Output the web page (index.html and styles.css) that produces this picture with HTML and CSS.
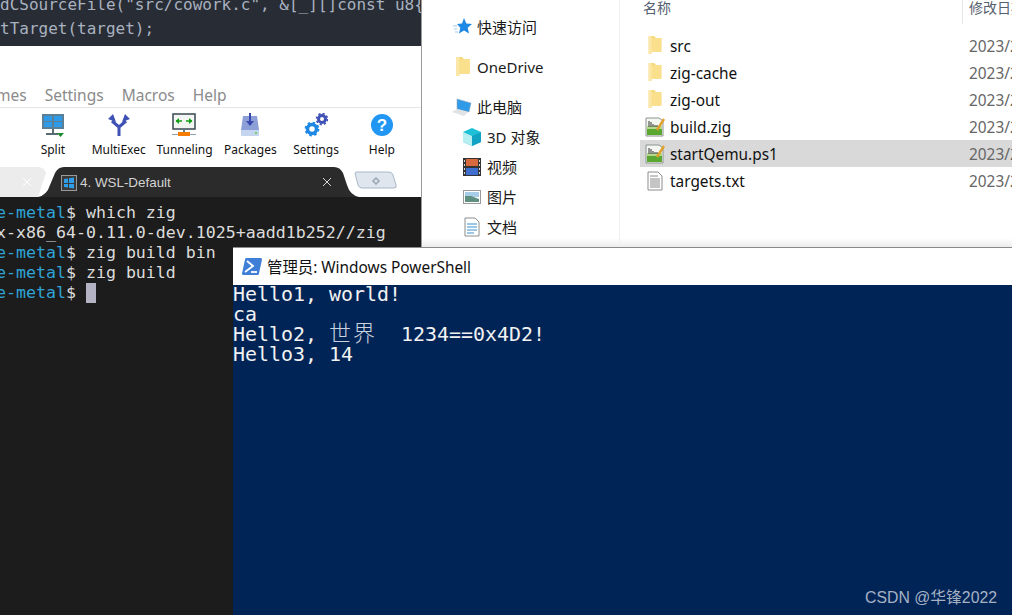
FILE: index.html
```html
<!DOCTYPE html>
<html lang="zh-CN">
<head>
<meta charset="utf-8">
<title>Desktop</title>
<link rel="stylesheet" href="styles.css">
</head>
<body>
<svg class="defs" width="0" height="0">
  <symbol id="folder" viewBox="0 0 14 18">
    <path d="M1 0h5l2 2h5v13H3l-2 2z" fill="#f6d675"/>
    <path d="M1 0h3v17H1z" fill="#fbe8a8"/>
    <path d="M4 2h9v13H4z" fill="#fadf8d"/>
  </symbol>
  <symbol id="script" viewBox="0 0 20 20">
    <path d="M1 1h13l4 3v15H1z" fill="#f4f6f2" stroke="#8c9490"/>
    <path d="M2 11h15v7H2z" fill="#5aa832"/>
    <path d="M2 9h15v3H2z" fill="#b5d98c"/>
    <path d="M4 4v6M6 5v5M8 7v3M10 8v2M12 8v2" stroke="#333" stroke-width="1"/>
    <path d="M12 13 19 2" stroke="#e0a02a" stroke-width="2.400"/>
  </symbol>
  <symbol id="doc" viewBox="0 0 16 20">
    <path d="M1 1h10l4 4v14H1z" fill="#fff" stroke="#8c8c8c"/>
    <path d="M3 5h8M3 8h10M3 10h10M3 12h10M3 14h10M3 16h10" stroke="#8a8a8a"/>
  </symbol>
</svg>

<main class="desktop">
  <section class="win moba">
    <div class="code">
      <div class="code-line">dCSourceFile("src/cowork.c", &amp;[_][]const u8{</div>
      <div class="code-line">tTarget(target);</div>
    </div>
    <div class="moba-top"></div>
    <nav class="menu"><span>mes</span><span>Settings</span><span>Macros</span><span>Help</span></nav>
    <div class="tools">
      <div class="tool">
        <svg width="24" height="24" viewBox="0 0 24 24"><rect x="1" y="1" width="22" height="15" fill="#5b7f95"/><rect x="3" y="3" width="8" height="5" fill="#2e9be8"/><rect x="13" y="3" width="8" height="5" fill="#2e9be8"/><rect x="3" y="9" width="8" height="5" fill="#2e9be8"/><rect x="13" y="9" width="8" height="5" fill="#2e9be8"/><path d="M11 16h2v4h-2zM5 20h12v2H5z" fill="#5a6a72"/><path d="M16 20h7l-3.500 4z" fill="#1f8a2e"/></svg>
        <span>Split</span>
      </div>
      <div class="tool">
        <svg width="24" height="24" viewBox="0 0 24 24"><path d="M12 23V14L5 8M12 14l7-6" fill="none" stroke="#3f51b5" stroke-width="3"/><path d="M1 6 6 1l3 8zM23 6l-5-5-3 8z" fill="#3f51b5"/></svg>
        <span>MultiExec</span>
      </div>
      <div class="tool">
        <svg width="24" height="24" viewBox="0 0 24 24"><rect x="1" y="1" width="22" height="15" fill="#f2f5f2" stroke="#37474f" stroke-width="1.500"/><path d="M4 8h6M14 8h6" stroke="#12a012" stroke-width="1.500"/><path d="M7 5 3.500 8 7 11zM17 5l3.500 3-3.500 3z" fill="#12a012"/><path d="M11 16h2v4h-2z" fill="#607d8b"/><path d="M0 21h24v1H0z" fill="#90a4ae"/><rect x="6" y="19" width="12" height="4" fill="#f57c00"/></svg>
        <span>Tunneling</span>
      </div>
      <div class="tool">
        <svg width="24" height="24" viewBox="0 0 24 24"><path d="M5 3h14l2 14H3z" fill="#8c9fd6"/><path d="M3 17h18v5q0 1-1 1H4q-1 0-1-1z" fill="#c5d5f0"/><circle cx="18" cy="20" r="1" fill="#5ad13c"/><path d="M11 0h2v8h3l-4 5-4-5h3z" fill="#3949ab"/></svg>
        <span>Packages</span>
      </div>
      <div class="tool">
        <svg width="24" height="24" viewBox="0 0 24 24"><circle cx="8" cy="16" r="4.500" fill="none" stroke="#1e88e5" stroke-width="3.500"/><circle cx="8" cy="16" r="6.500" fill="none" stroke="#1e88e5" stroke-width="1.800" stroke-dasharray="2.500 2.600"/><circle cx="18" cy="6" r="3.500" fill="none" stroke="#3f51b5" stroke-width="3"/><circle cx="18" cy="6" r="5.500" fill="none" stroke="#3f51b5" stroke-width="1.600" stroke-dasharray="2.200 2.100"/></svg>
        <span>Settings</span>
      </div>
      <div class="tool">
        <svg width="24" height="24" viewBox="0 0 24 24"><circle cx="12" cy="12" r="11" fill="#2196f3"/><text x="12" y="18" class="qmark">?</text></svg>
        <span>Help</span>
      </div>
    </div>
    <div class="tabbar">
      <svg class="tabshapes" width="421" height="30" viewBox="0 0 421 30">
        <path d="M-10 30V0H38q6 0 8 6l-8 24z" fill="#ececec"/>
        <path d="M38 30q9-2 12-12l5-12q3-6 9-6h270q6 0 9 6l4 12q3 10 12 12z" fill="#2b2b2b"/>
        <path d="M355 6q0-1 2-1h32q3 0 4 3l3 10q1 3-2 3h-32q-3 0-4-3z" fill="#dfe6ee" stroke="#a9b7c6"/>
        <path d="M23 11l8 8M31 11l-8 8" stroke="#fff" stroke-width="1"/>
        <path d="M323 11l8 8M331 11l-8 8" stroke="#d8d8d8" stroke-width="1"/>
        <path d="M373 13h2v-2h2v2h2v2h-2v2h-2v-2h-2z" fill="none" stroke="#8a98a8"/>
      </svg>
      <div class="tab-title">
        <svg width="16" height="16" viewBox="0 0 16 16"><rect x=".5" y=".5" width="15" height="15" fill="#3a3a3a" stroke="#9a9a9a"/><path d="M3 4l4-.6V8H3zM8 3.200 13 2.500V8H8zM3 9h4v3.600L3 12zM8 9h5v4.500L8 12.800z" fill="#2f9de8"/></svg>
        <span>4. WSL-Default</span>
      </div>
    </div>
    <div class="term">
      <div class="tline"><span class="prompt">e-metal</span>$ which zig</div>
      <div class="tline">x-x86_64-0.11.0-dev.1025+aadd1b252//zig</div>
      <div class="tline"><span class="prompt">e-metal</span>$ zig build bin</div>
      <div class="tline"><span class="prompt">e-metal</span>$ zig build</div>
      <div class="tline"><span class="prompt">e-metal</span>$ <span class="cursor"></span></div>
    </div>
  </section>

  <section class="win explorer">
    <aside class="side">
      <div class="side-item top">
        <svg width="20" height="20" viewBox="0 0 20 20"><path d="M11 1l2.300 5.500 5.700.5-4.300 3.800 1.300 5.700-5-3-5 3 1.300-5.700L4 7l5-.5z" fill="#1e88e5"/><path d="M0 9h4M1 12h3M2 15h3" stroke="#9fc9ef"/></svg>
        <span>快速访问</span>
      </div>
      <div class="side-item top">
        <svg width="20" height="20" viewBox="0 0 14 18"><use href="#folder"/></svg>
        <span>OneDrive</span>
      </div>
      <div class="side-item top pc">
        <svg width="20" height="20" viewBox="0 0 20 20"><path d="M5 2l14 4-2 9-12-3z" fill="#2f9be8" stroke="#9ab" stroke-width=".6"/><path d="M0 15l5-3 11 3-4 4z" fill="#dfe3e8"/></svg>
        <span>此电脑</span>
      </div>
      <div class="side-item sub">
        <svg width="20" height="20" viewBox="0 0 20 20"><path d="M10 1l9 4v10l-9 4-9-4V5z" fill="#1ec0d8"/><path d="M1 5l9 4v10l-9-4z" fill="#b6eef2"/><path d="M10 9l9-4v10l-9 4z" fill="#12a3c4"/></svg>
        <span>3D 对象</span>
      </div>
      <div class="side-item sub">
        <svg width="20" height="20" viewBox="0 0 20 20"><rect x="1" y="1" width="18" height="18" fill="#333"/><rect x="4" y="2" width="12" height="7" fill="#d8693c"/><rect x="4" y="11" width="12" height="7" fill="#3f6fd0"/><path d="M2 3h1v2H2zM2 7h1v2H2zM2 11h1v2H2zM2 15h1v2H2zM17 3h1v2h-1zM17 7h1v2h-1zM17 11h1v2h-1zM17 15h1v2h-1z" fill="#ddd"/></svg>
        <span>视频</span>
      </div>
      <div class="side-item sub">
        <svg width="20" height="20" viewBox="0 0 20 20"><rect x="1.500" y="3.500" width="17" height="13" fill="#fff" stroke="#9a9a9a"/><rect x="3" y="5" width="14" height="5" fill="#a8cde8"/><path d="M3 9l6 0 8 3v3H3z" fill="#5f8f80"/></svg>
        <span>图片</span>
      </div>
      <div class="side-item sub">
        <svg width="20" height="20" viewBox="0 0 16 20"><path d="M1 1h10l4 4v14H1z" fill="#fff" stroke="#8c8c8c"/><path d="M3 7h10M3 10h10M3 13h10M3 16h7" stroke="#3a8fd0"/></svg>
        <span>文档</span>
      </div>
    </aside>
    <div class="files">
      <div class="file-head"><span class="col-name">名称</span><span class="col-date">修改日期</span></div>
      <div class="file"><span class="ficon"><svg width="16" height="19" viewBox="0 0 14 18"><use href="#folder"/></svg></span><span class="fname">src</span><span class="fdate">2023/2/14 12:21</span></div>
      <div class="file"><span class="ficon"><svg width="16" height="19" viewBox="0 0 14 18"><use href="#folder"/></svg></span><span class="fname">zig-cache</span><span class="fdate">2023/2/14 12:21</span></div>
      <div class="file"><span class="ficon"><svg width="16" height="19" viewBox="0 0 14 18"><use href="#folder"/></svg></span><span class="fname">zig-out</span><span class="fdate">2023/2/14 12:21</span></div>
      <div class="file"><span class="ficon"><svg width="20" height="20" viewBox="0 0 20 20"><use href="#script"/></svg></span><span class="fname">build.zig</span><span class="fdate">2023/2/14 12:21</span></div>
      <div class="file selected"><span class="ficon"><svg width="20" height="20" viewBox="0 0 20 20"><use href="#script"/></svg></span><span class="fname">startQemu.ps1</span><span class="fdate">2023/2/14 12:21</span></div>
      <div class="file"><span class="ficon"><svg width="16" height="20" viewBox="0 0 16 20"><use href="#doc"/></svg></span><span class="fname">targets.txt</span><span class="fdate">2023/2/14 12:21</span></div>
    </div>
  </section>

  <section class="win ps">
    <header class="ps-title">
      <svg width="20" height="17" viewBox="0 0 20 17"><path d="M4 0h15q1 0 1 1.500l-3 14q-.3 1.500-1.500 1.500H1q-1 0-1-1.500l3-14Q3.300 0 4 0z" fill="#3f7fd8"/><path d="M5 3l6 5-8 6" fill="none" stroke="#fff" stroke-width="1.800"/><path d="M9 14h6" stroke="#fff" stroke-width="1.800"/></svg>
      <span>管理员: Windows PowerShell</span>
    </header>
    <div class="ps-body">
      <div class="ps-line">Hello1, world!</div>
      <div class="ps-line">ca</div>
      <div class="ps-line">Hello2, <span class="cjk">世界</span>  1234==0x4D2!</div>
      <div class="ps-line">Hello3, 14</div>
    </div>
    <div class="mark">CSDN @华锋2022</div>
  </section>
</main>
</body>
</html>
```

FILE: styles.css
```css
* { box-sizing: border-box; }
html, body { margin: 0; padding: 0; width: 1012px; height: 615px; overflow: hidden; background: #fff; }
.defs { position: absolute; }
.desktop { position: relative; width: 1012px; height: 615px; overflow: hidden; font-family: "Noto Sans", "Noto Sans CJK SC", sans-serif; }
.win { position: absolute; overflow: hidden; }

/* MobaXterm + editor strip */
.moba { left: 0; top: 0; width: 422px; height: 615px; background: #fff; display: flex; flex-direction: column; border-right: 1px solid #9a9a9a; }
.code { height: 46px; flex: none; background: #282c34; color: #a9b2c0; font: 16px/24px "DejaVu Sans Mono", monospace; white-space: nowrap; overflow: hidden; }
.code-line { height: 24px; }
.code-line:first-child { margin-top: -7px; }
.moba-top { height: 38px; flex: none; background: #fff; }
.menu { height: 24px; flex: none; display: flex; gap: 18px; margin-left: -4px; font-size: 15.500px; line-height: 23px; color: #8b8b8b; border-bottom: 1px solid #e6e6e6; }
.tools { height: 59px; flex: none; display: grid; grid-template-columns: repeat(6, 65.800px); padding-left: 20px; padding-top: 5px; }
.tool { display: flex; flex-direction: column; align-items: center; gap: 3px; font-size: 12px; line-height: 20px; color: #111; white-space: nowrap; }
.qmark { font: bold 17px "Liberation Sans", sans-serif; fill: #fff; text-anchor: middle; }
.tabbar { position: relative; height: 30px; background: #fff; flex: none; }
.tabshapes { position: absolute; left: 0; top: 0; }
.tab-title { position: relative; display: flex; align-items: center; gap: 3px; height: 30px; padding-left: 61px; padding-top: 1px; font: 13.400px/30px "Liberation Sans", sans-serif; color: #d4d4d4; }
.term { flex: 1; background: #1c1c1c; color: #dcdcdc; padding-top: 6px; font: 16.600px/20px "DejaVu Sans Mono", monospace; }
.tline { margin-left: -4px; height: 20px; white-space: pre; }
.prompt { color: #2fa3d6; }
.cursor { display: inline-block; width: 10px; height: 20px; background: #b3b3c4; vertical-align: top; }

/* Explorer */
.explorer { left: 422px; top: 0; width: 590px; height: 247px; background: linear-gradient(#fff 238px, #ececec 247px); display: flex; }
.side { width: 198px; border-right: 1px solid #efefef; padding-top: 17px; flex: none; color: #1a1a1a; font-size: 15px; }
.side-item { display: flex; align-items: center; height: 20px; }
.side-item span { line-height: 20px; }
.side-item.top { padding-left: 31px; gap: 4px; margin-bottom: 20px; }
.side-item.pc { padding-left: 30px; gap: 5px; margin-bottom: 10px; }
.side-item.sub { padding-left: 40px; gap: 5px; margin-bottom: 10px; }
.files { flex: 1; min-width: 0; font-size: 15.400px; overflow: hidden; }
.file-head { height: 32px; display: flex; color: #55606e; font-size: 14px; line-height: 16px; }
.col-name { width: 342px; flex: none; padding-left: 23px; }
.col-date { flex: none; border-left: 1px solid #e5e5e5; padding-left: 6px; height: 24px; white-space: nowrap; }
.file { display: flex; align-items: center; height: 27px; margin-left: 20px; color: #111; white-space: nowrap; }
.ficon { width: 30px; flex: none; display: flex; justify-content: center; padding-right: 1px; }
.fname { width: 299px; flex: none; padding-top: 2px; }
.fdate { color: #666; padding-top: 2px; }
.file.selected { background: #d9d9d9; }

/* PowerShell */
.ps { left: 233px; top: 247px; width: 779px; height: 368px; display: flex; flex-direction: column; background: #012456; }
.ps-title { height: 38px; background: #fff; border-top: 1px solid #8a8a8a; display: flex; align-items: center; gap: 5px; padding-left: 9px; font-size: 15.400px; color: #111; flex: none; }
.ps-body { flex: 1; color: #f2f2f2; font: 19.930px/20px "DejaVu Sans Mono", monospace; }
.ps-line { height: 20px; white-space: pre; }
.cjk { font-family: "Noto Sans CJK SC", serif; font-size: 22px; line-height: 0; letter-spacing: 2px; color: #c9d2de; font-weight: 300; }
.mark { position: absolute; right: 15px; bottom: 7px; font: 15.800px/20px "Liberation Sans", "Noto Sans CJK SC", sans-serif; color: #a6b2c4; }
```
